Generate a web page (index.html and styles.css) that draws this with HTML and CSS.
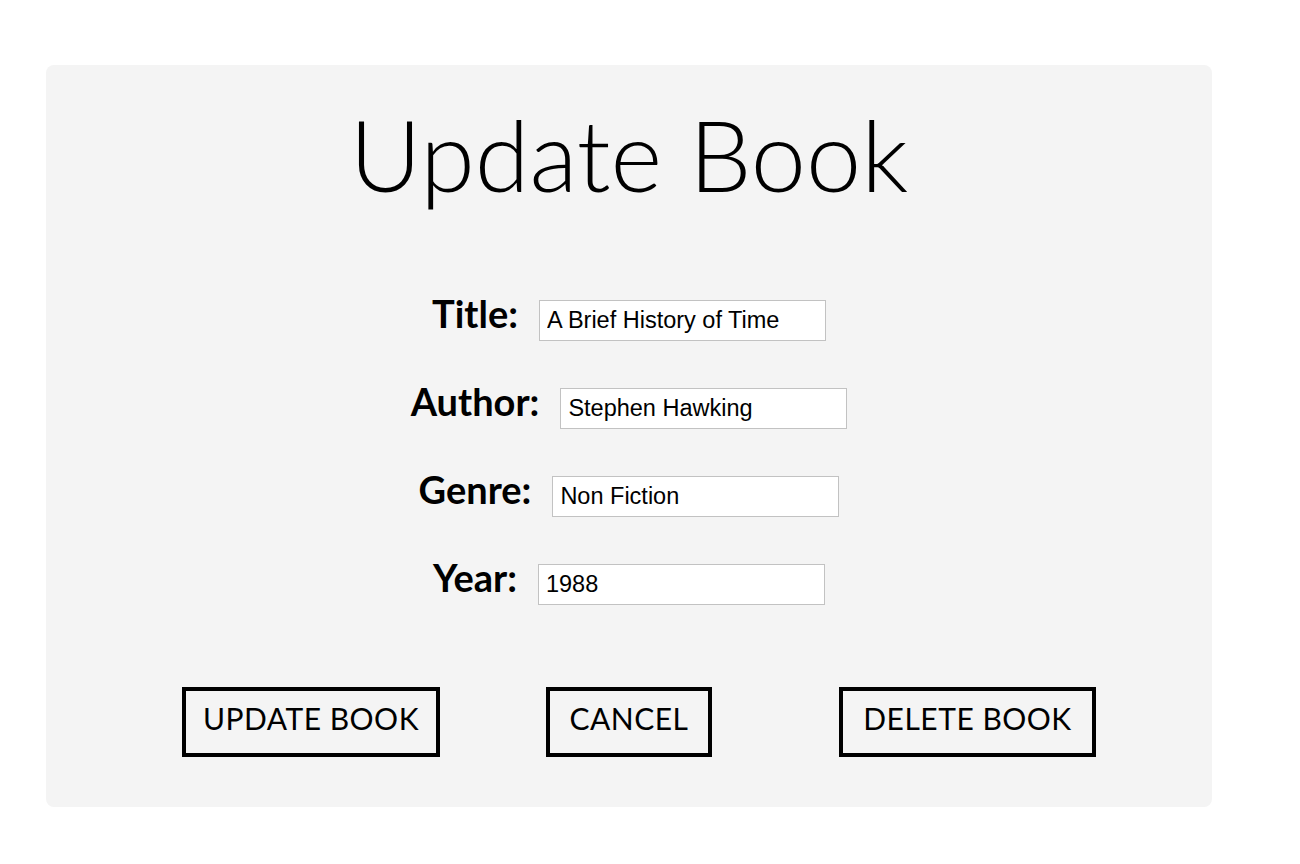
FILE: index.html
```html
<!DOCTYPE html>
<html lang="en">
<head>
<meta charset="utf-8">
<title>Update Book</title>
<link rel="stylesheet" href="styles.css">
</head>
<body>
<main class="card">
  <h1 class="title">Update Book</h1>
  <form class="form">
    <div class="row">
      <label class="label" for="title">Title:</label>
      <input class="field" id="title" type="text" value="A Brief History of Time">
    </div>
    <div class="row">
      <label class="label" for="author">Author:</label>
      <input class="field" id="author" type="text" value="Stephen Hawking">
    </div>
    <div class="row">
      <label class="label" for="genre">Genre:</label>
      <input class="field" id="genre" type="text" value="Non Fiction">
    </div>
    <div class="row">
      <label class="label" for="year">Year:</label>
      <input class="field" id="year" type="text" value="1988">
    </div>
  </form>
  <div class="actions">
    <button class="btn btn-update" type="button">UPDATE BOOK</button>
    <button class="btn btn-cancel" type="button">CANCEL</button>
    <button class="btn btn-delete" type="button">DELETE BOOK</button>
  </div>
</main>
</body>
</html>
```
FILE: styles.css
```css
html, body {
  margin: 0;
  padding: 0;
  background: #ffffff;
}

body {
  font-family: "Lato", "Open Sans", sans-serif;
  color: #000;
}

.card {
  box-sizing: border-box;
  width: 1166px;
  height: 742px;
  margin: 65px 0 0 46px;
  padding: 39px 0 0 0;
  background: #f4f4f4;
  border-radius: 8px;
}

.title {
  margin: 0;
  font-family: "Lato", sans-serif;
  font-weight: 300;
  font-size: 99px;
  line-height: 100px;
  text-align: center;
  letter-spacing: 0;
}

.form {
  margin: 96px 0 0 0;
  display: flex;
  flex-direction: column;
  gap: 47px;
}

.row {
  display: flex;
  justify-content: center;
  align-items: baseline;
  gap: 21px;
}

.label {
  font-family: "Lato", sans-serif;
  font-weight: 700;
  font-size: 38px;
  line-height: 20px;
}

.field {
  box-sizing: border-box;
  width: 287px;
  height: 41px;
  margin: 0;
  padding: 0 7px;
  border: 1px solid #c2c2c2;
  border-radius: 0;
  background: #ffffff;
  font-family: "Liberation Sans", Arial, sans-serif;
  font-size: 23.5px;
  color: #000;
  outline: none;
}

.actions {
  display: flex;
  margin-top: 82px;
  padding-left: 136px;
}

.btn {
  box-sizing: border-box;
  height: 70px;
  padding: 0 0 9px 0;
  border: 4px solid #000;
  border-radius: 0;
  background: transparent;
  font-family: "Lato", sans-serif;
  font-weight: 400;
  font-size: 30px;
  color: #000;
  letter-spacing: 0.5px;
  text-align: center;
}

.btn-update {
  width: 258px;
}

.btn-cancel {
  width: 166px;
  margin: 0 127px 0 106px;
}

.btn-delete {
  width: 257px;
}
```
